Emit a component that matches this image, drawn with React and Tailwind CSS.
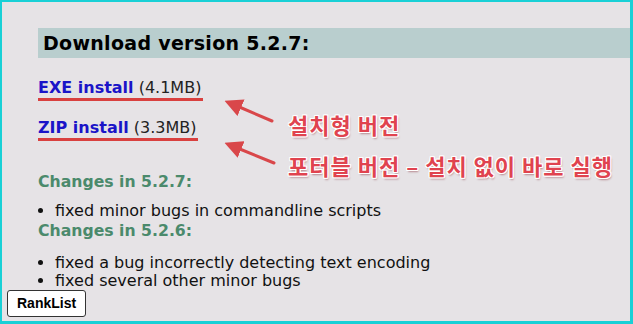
import React from 'react';

function Arrow({ x1, y1, x2, y2 }) {
    return <line x1={x1} y1={y1} x2={x2} y2={y2} stroke="#d9474a" strokeWidth="3" strokeLinecap="round" markerEnd="url(#head)" />;
}

function Note({ children, className }) {
    return (
        <div
            className={"absolute font-bold text-[22px] leading-none tracking-[1px] text-[#e0434f] " + className}
            style={{ fontFamily: '"Noto Sans CJK KR", sans-serif', textShadow: '1px 0 #fff, -1px 0 #fff, 0 1px #fff, 0 -1px #fff, 1px 1px #fff, -1px -1px #fff, 1px -1px #fff, -1px 1px #fff, 1px 2px 2px rgba(120,20,30,0.45)' }}
        >
            {children}
        </div>
    );
}

function App() {
    return (
        <div className="relative w-[633px] h-[324px] overflow-hidden bg-[#e6e3e6] border-t-2 border-l-2 border-b-[3px] border-r-[3px] border-[#19d0d6]" style={{ fontFamily: '"DejaVu Sans", Verdana, sans-serif' }}>
            <div className="pt-[26px] pl-[36px] flex flex-col">
                <div className="h-[30px] bg-[#b9cece] pl-[5px] flex items-center">
                    <h1 className="text-[19px] font-bold text-black tracking-[0.3px]">Download version 5.2.7:</h1>
                </div>

                <div className="mt-[20px] flex flex-col items-start gap-[17px] text-[16px] leading-[20px]">
                    <span className="border-b-[3px] border-[#d9403f] pr-[2px]">
                        <a className="font-bold text-[#1a14c8]">EXE install</a> <span className="text-[#222]">(4.1MB)</span>
                    </span>
                    <span className="border-b-[3px] border-[#d9403f] pr-[2px]">
                        <a className="font-bold text-[#1a14c8]">ZIP install</a> <span className="text-[#222]">(3.3MB)</span>
                    </span>
                </div>

                <h3 className="mt-[31px] text-[15.7px] leading-[20px] font-bold text-[#4b8a6c]">Changes in 5.2.7:</h3>
                <ul className="mt-[10px] list-disc pl-[17px] text-[16px] leading-[18px] text-[#111]">
                    <li>fixed minor bugs in commandline scripts</li>
                </ul>
                <h3 className="mt-[1px] text-[15.7px] leading-[20px] font-bold text-[#4b8a6c]">Changes in 5.2.6:</h3>
                <ul className="mt-[13px] list-disc pl-[17px] text-[16px] leading-[18px] text-[#111]">
                    <li>fixed a bug incorrectly detecting text encoding</li>
                    <li>fixed several other minor bugs</li>
                </ul>
            </div>

            <svg className="absolute left-0 top-0" width="633" height="324">
                <defs>
                    <marker id="head" markerWidth="6" markerHeight="6" refX="4" refY="3" orient="auto">
                        <path d="M0,0 L6,3 L0,6 Z" fill="#d9474a" />
                    </marker>
                </defs>
                <Arrow x1={270} y1={119} x2={228} y2={101} />
                <Arrow x1={272} y1={161} x2={228} y2={143} />
            </svg>

            <Note className="left-[286px] top-[111px]">설치형 버전</Note>
            <Note className="left-[286px] top-[152px]">포터블 버전 – 설치 없이 바로 실행</Note>

            <button className="absolute left-[5px] top-[288px] h-[27px] px-[9px] bg-white border border-[#333] rounded-[3px] text-[14px] font-bold text-black" style={{ fontFamily: '"Liberation Sans", Arial, sans-serif' }}>
                RankList
            </button>
        </div>
    );
}

export default App;
